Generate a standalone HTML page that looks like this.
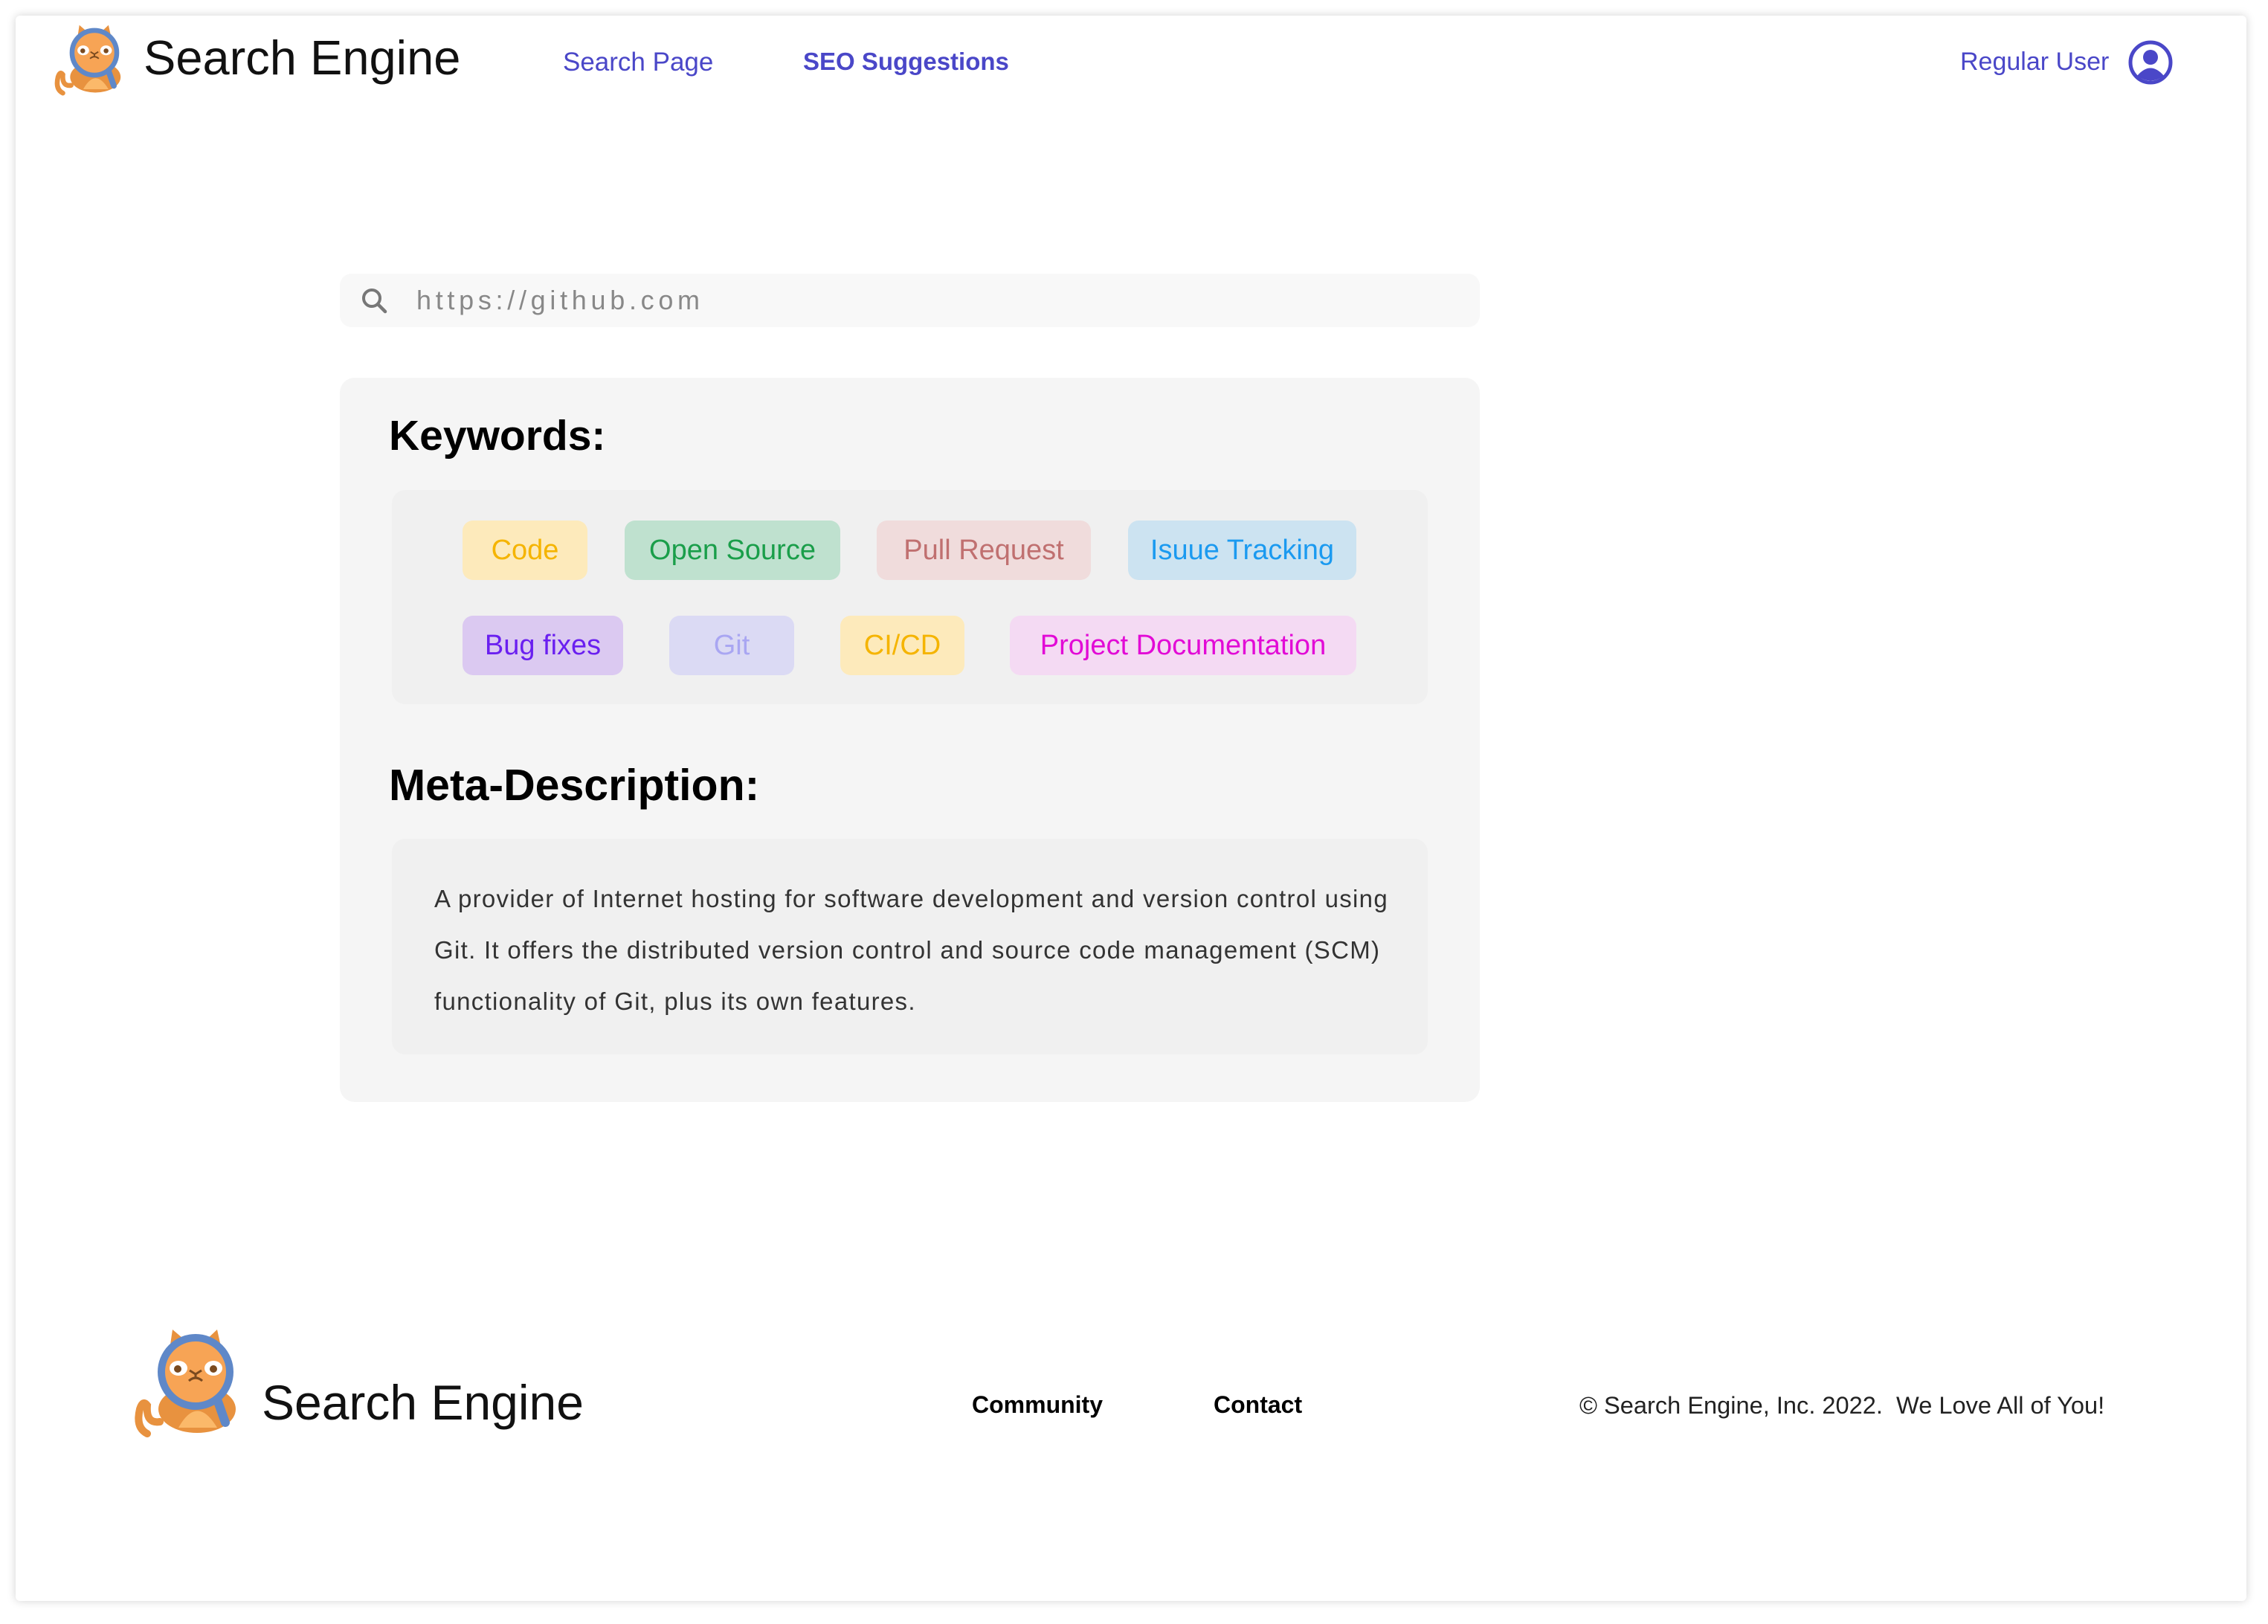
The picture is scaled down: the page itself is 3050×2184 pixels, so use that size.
<!DOCTYPE html>
<html><head><meta charset="utf-8"><style>
*{margin:0;padding:0;box-sizing:border-box}
body{width:3050px;height:2184px;background:#fff;position:relative;font-family:"Liberation Sans",sans-serif;overflow:hidden}
.page{position:absolute;left:21px;top:21px;width:3000px;height:2132px;background:#fff;box-shadow:0 0 12px rgba(0,0,0,.18);border-radius:6px}
.a{position:absolute;white-space:nowrap}
.tag{position:absolute;height:80px;border-radius:14px;font-size:38px;display:flex;align-items:center;justify-content:center}
</style></head><body>
<div class="page"></div>
<svg class="a" style="left:66px;top:22px" width="118" height="111" viewBox="0 0 180 170"><defs><g id="cat">
<path d="M28 158 Q12 150 18 125 Q22 112 28 120 Q26 145 45 142" fill="none" stroke="#e8923f" stroke-width="10" stroke-linecap="round"/>
<path d="M58 45 L62 18 L82 35 Z M128 45 L122 18 L104 35 Z" fill="#e8923f"/>
<ellipse cx="95" cy="125" rx="52" ry="32" fill="#e8923f"/>
<path d="M70 150 Q95 105 122 150 Z" fill="#fbb96a"/>
<circle cx="93" cy="75" r="42" fill="#f7a455"/>
<ellipse cx="70" cy="70" rx="12" ry="10" fill="#fff"/><ellipse cx="117" cy="70" rx="12" ry="10" fill="#fff"/>
<circle cx="69" cy="71" r="5" fill="#7a4a1f"/><circle cx="117" cy="71" r="5" fill="#7a4a1f"/>
<path d="M85 73 L93 78 L101 73 M93 78 L93 82 M84 87 Q93 79 102 87" fill="none" stroke="#7a4a1f" stroke-width="3"/>
<circle cx="93" cy="75" r="46" fill="none" stroke="#5f88c8" stroke-width="10"/>
<path d="M122 112 L133 143" stroke="#5f88c8" stroke-width="12" stroke-linecap="round"/>
</g></defs><use href="#cat"/></svg>
<div class="a" style="left:193px;top:40px;font-size:65px;color:#111">Search Engine</div>
<div class="a" style="left:757px;top:64px;font-size:35px;color:#4a47c8">Search Page</div>
<div class="a" style="left:1080px;top:64px;font-size:33px;color:#4a47c8;font-weight:bold">SEO Suggestions</div>
<div class="a" style="left:2636px;top:64px;font-size:34px;color:#4a47c8">Regular User</div>
<svg class="a" style="left:2861px;top:53px" width="62" height="62" viewBox="0 0 62 62"><circle cx="31" cy="31" r="27" fill="none" stroke="#4a47c8" stroke-width="5"/><circle cx="31" cy="24" r="10" fill="#4a47c8"/><path d="M13 49 Q31 28 49 49 Q31 62 13 49Z" fill="#4a47c8"/></svg>

<div class="a" style="left:457px;top:368px;width:1533px;height:72px;background:#f8f8f8;border-radius:16px"></div>
<svg class="a" style="left:484px;top:385px" width="40" height="40" viewBox="0 0 40 40"><circle cx="16" cy="16" r="11" fill="none" stroke="#777" stroke-width="4"/><path d="M24 24 L34 34" stroke="#777" stroke-width="4.5" stroke-linecap="round"/></svg>
<div class="a" style="left:560px;top:383px;font-size:36px;color:#888;letter-spacing:5.7px">https://github.com</div>

<div class="a" style="left:457px;top:508px;width:1533px;height:974px;background:#f5f5f5;border-radius:20px"></div>
<div class="a" style="left:523px;top:553px;font-size:57px;font-weight:bold;color:#000">Keywords:</div>
<div class="a" style="left:527px;top:659px;width:1393px;height:288px;background:#f0f0f0;border-radius:18px"></div>
<div class="tag" style="left:622px;top:700px;width:168px;background:#fdeabb;color:#f5b400">Code</div>
<div class="tag" style="left:840px;top:700px;width:290px;background:#bfe1cf;color:#1a9e4a">Open Source</div>
<div class="tag" style="left:1179px;top:700px;width:288px;background:#f0dcdc;color:#c07070">Pull Request</div>
<div class="tag" style="left:1517px;top:700px;width:307px;background:#cce3f1;color:#1b9af0">Isuue Tracking</div>
<div class="tag" style="left:622px;top:828px;width:216px;background:#dbc9f1;color:#6a1ff0">Bug fixes</div>
<div class="tag" style="left:900px;top:828px;width:168px;background:#dbdaf4;color:#a9a6f2">Git</div>
<div class="tag" style="left:1130px;top:828px;width:167px;background:#fdeabb;color:#f5b400">CI/CD</div>
<div class="tag" style="left:1358px;top:828px;width:466px;background:#f4daf3;color:#e20ad6">Project Documentation</div>

<div class="a" style="left:523px;top:1022px;font-size:59px;font-weight:bold;color:#000">Meta-Description:</div>
<div class="a" style="left:527px;top:1128px;width:1393px;height:290px;background:#f0f0f0;border-radius:18px"></div>
<div class="a" style="left:584px;top:1174px;font-size:33px;color:#333;line-height:69px;letter-spacing:1.3px">A provider of Internet hosting for software development and version control using<br>Git. It offers the distributed version control and source code management (SCM)<br>functionality of Git, plus its own features.</div>

<svg class="a" style="left:170px;top:1770px" width="180" height="170" viewBox="0 0 180 170"><use href="#cat"/></svg>
<div class="a" style="left:352px;top:1848px;font-size:66px;color:#111">Search Engine</div>
<div class="a" style="left:1307px;top:1871px;font-size:32px;font-weight:bold;color:#000">Community</div>
<div class="a" style="left:1632px;top:1871px;font-size:32px;font-weight:bold;color:#000">Contact</div>
<div class="a" style="left:2124px;top:1871px;font-size:32.6px;color:#222">© Search Engine, Inc. 2022.&nbsp; We Love All of You!</div>
</body></html>
